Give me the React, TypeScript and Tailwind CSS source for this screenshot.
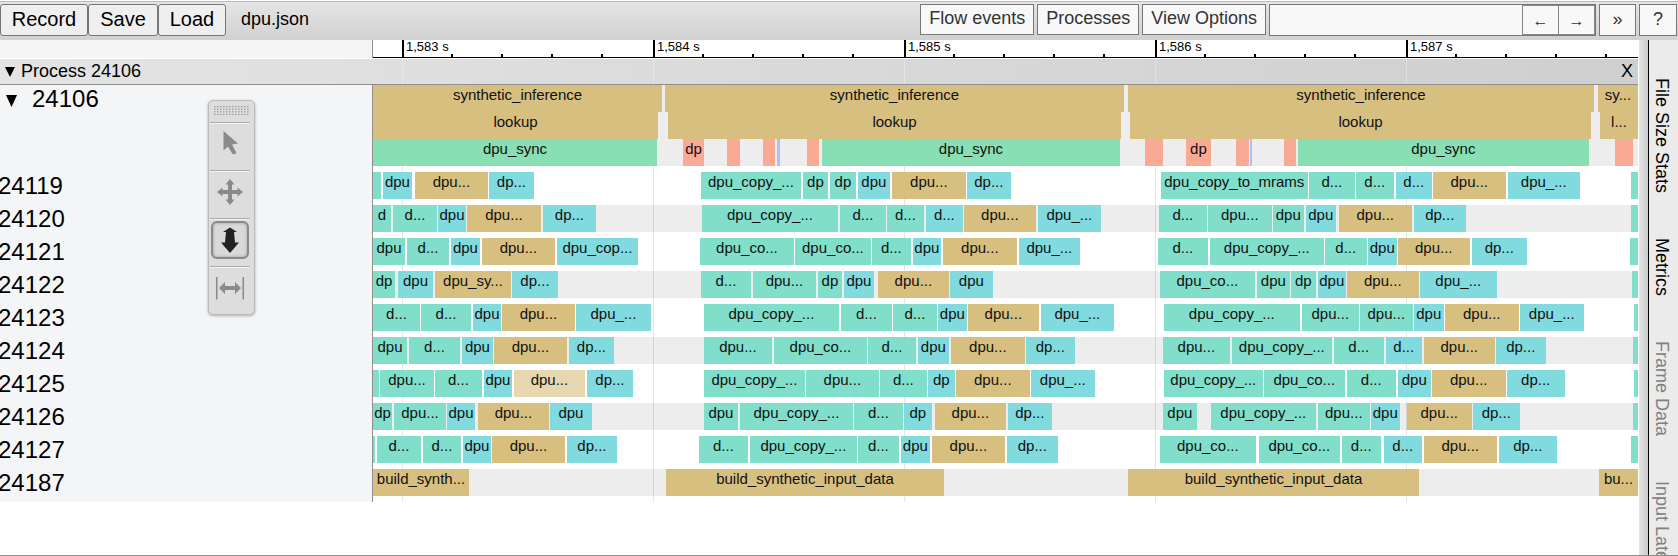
import React from "react";

type Tone = "teal" | "cyan" | "tan" | "sand" | "green" | "coral" | "blue";
type Slice = [start: number, end: number, tone: Tone, label?: string];

const TONES: Record<Tone, string> = {
  teal: "bg-[#80decb]",
  cyan: "bg-[#80dade]",
  tan: "bg-[#d7bf80]",
  sand: "bg-[#e6d7b0]",
  green: "bg-[#87dfb3]",
  coral: "bg-[#faaa94]",
  blue: "bg-[#a3c4fb]",
};

// Visible span of the timeline, in slice units.
const SPAN = 1265;
const pct = (v: number) => `${(v / SPAN) * 100}%`;

const MAIN_ROWS: Slice[][] = [
  [
    [0, 289, "tan", "synthetic_inference"],
    [292, 751, "tan", "synthetic_inference"],
    [755, 1221, "tan", "synthetic_inference"],
    [1225, 1265, "tan", "sy..."],
  ],
  [
    [0, 285, "tan", "lookup"],
    [295, 748, "tan", "lookup"],
    [757, 1218, "tan", "lookup"],
    [1227, 1265, "tan", "l..."],
  ],
  [
    [0, 284, "green", "dpu_sync"],
    [310, 331, "coral", "dp"],
    [354, 367, "coral"],
    [390, 402, "coral"],
    [404, 407, "blue"],
    [434, 446, "coral"],
    [449, 747, "green", "dpu_sync"],
    [772, 790, "coral"],
    [813, 838, "coral", "dp"],
    [863, 876, "coral"],
    [877, 879, "blue"],
    [911, 923, "coral"],
    [925, 1216, "green", "dpu_sync"],
    [1242, 1260, "coral"],
  ],
];

const THREADS: { id: string; slices: Slice[] }[] = [
  {
    id: "24119",
    slices: [
      [0, 8, "teal"], [10, 39, "cyan", "dpu"], [42, 115, "tan", "dpu..."], [116, 161, "cyan", "dp..."],
      [328, 428, "teal", "dpu_copy_..."], [430, 455, "teal", "dp"], [457, 483, "teal", "dp"], [485, 517, "cyan", "dpu"],
      [519, 593, "tan", "dpu..."], [594, 638, "cyan", "dp..."],
      [788, 935, "teal", "dpu_copy_to_mrams"], [936, 982, "teal", "d..."], [983, 1021, "teal", "d..."],
      [1023, 1059, "cyan", "d..."], [1060, 1133, "tan", "dpu..."], [1135, 1207, "cyan", "dpu_..."], [1258, 1265, "teal"],
    ],
  },
  {
    id: "24120",
    slices: [
      [0, 18, "teal", "d"], [20, 64, "teal", "d..."], [65, 93, "cyan", "dpu"], [94, 168, "tan", "dpu..."], [170, 223, "cyan", "dp..."],
      [329, 465, "teal", "dpu_copy_..."], [467, 513, "teal", "d..."], [514, 551, "teal", "d..."], [553, 590, "cyan", "d..."],
      [591, 663, "tan", "dpu..."], [665, 728, "cyan", "dpu_..."],
      [786, 834, "teal", "d..."], [835, 899, "teal", "dpu..."], [900, 931, "teal", "dpu"], [933, 963, "cyan", "dpu"],
      [966, 1039, "tan", "dpu..."], [1041, 1093, "cyan", "dp..."], [1258, 1265, "teal"],
    ],
  },
  {
    id: "24121",
    slices: [
      [0, 32, "teal", "dpu"], [34, 76, "teal", "d..."], [78, 107, "cyan", "dpu"], [109, 182, "tan", "dpu..."], [184, 265, "cyan", "dpu_cop..."],
      [327, 421, "teal", "dpu_co..."], [422, 498, "teal", "dpu_co..."], [499, 538, "teal", "d..."], [540, 568, "cyan", "dpu"],
      [570, 644, "tan", "dpu..."], [646, 707, "cyan", "dpu_..."],
      [785, 835, "teal", "d..."], [837, 951, "teal", "dpu_copy_..."], [952, 994, "teal", "d..."], [995, 1024, "cyan", "dpu"],
      [1025, 1097, "tan", "dpu..."], [1099, 1154, "cyan", "dp..."], [1257, 1265, "teal"],
    ],
  },
  {
    id: "24122",
    slices: [
      [0, 22, "teal", "dp"], [25, 60, "cyan", "dpu"], [62, 138, "tan", "dpu_sy..."], [139, 185, "cyan", "dp..."],
      [328, 378, "teal", "d..."], [380, 443, "teal", "dpu..."], [445, 469, "teal", "dp"], [471, 501, "cyan", "dpu"],
      [505, 576, "tan", "dpu..."], [577, 620, "cyan", "dpu"],
      [787, 882, "teal", "dpu_co..."], [884, 917, "teal", "dpu"], [918, 943, "teal", "dp"], [945, 973, "cyan", "dpu"],
      [974, 1046, "tan", "dpu..."], [1047, 1124, "cyan", "dpu_..."], [1259, 1265, "teal"],
    ],
  },
  {
    id: "24123",
    slices: [
      [0, 47, "teal", "d..."], [48, 98, "teal", "d..."], [100, 128, "cyan", "dpu"], [129, 202, "tan", "dpu..."], [203, 278, "cyan", "dpu_..."],
      [331, 466, "teal", "dpu_copy_..."], [468, 519, "teal", "d..."], [520, 564, "teal", "d..."], [565, 594, "cyan", "dpu"],
      [595, 666, "tan", "dpu..."], [668, 741, "cyan", "dpu_..."],
      [791, 927, "teal", "dpu_copy_..."], [929, 986, "teal", "dpu..."], [987, 1040, "teal", "dpu..."], [1041, 1071, "cyan", "dpu"],
      [1072, 1146, "tan", "dpu..."], [1147, 1211, "cyan", "dpu_..."], [1261, 1265, "teal"],
    ],
  },
  {
    id: "24124",
    slices: [
      [0, 34, "teal", "dpu"], [36, 87, "teal", "d..."], [89, 120, "cyan", "dpu"], [121, 194, "tan", "dpu..."], [196, 241, "cyan", "dp..."],
      [331, 399, "teal", "dpu..."], [401, 494, "teal", "dpu_co..."], [495, 543, "teal", "d..."], [545, 576, "cyan", "dpu"],
      [578, 652, "tan", "dpu..."], [653, 702, "cyan", "dp..."],
      [790, 857, "teal", "dpu..."], [859, 959, "teal", "dpu_copy_..."], [961, 1011, "teal", "d..."], [1013, 1049, "cyan", "d..."],
      [1051, 1122, "tan", "dpu..."], [1123, 1173, "cyan", "dp..."], [1260, 1265, "teal"],
    ],
  },
  {
    id: "24125",
    slices: [
      [0, 6, "teal"], [7, 61, "teal", "dpu..."], [62, 109, "teal", "d..."], [111, 139, "cyan", "dpu"], [141, 212, "sand", "dpu..."], [214, 260, "cyan", "dp..."],
      [331, 432, "teal", "dpu_copy_..."], [433, 506, "teal", "dpu..."], [507, 554, "teal", "d..."], [555, 582, "cyan", "dp"],
      [583, 657, "tan", "dpu..."], [658, 722, "cyan", "dpu_..."],
      [791, 890, "teal", "dpu_copy_..."], [891, 972, "teal", "dpu_co..."], [974, 1023, "teal", "d..."], [1025, 1058, "cyan", "dpu"],
      [1059, 1133, "tan", "dpu..."], [1134, 1192, "cyan", "dp..."], [1261, 1265, "teal"],
    ],
  },
  {
    id: "24126",
    slices: [
      [0, 19, "teal", "dp"], [21, 73, "teal", "dpu..."], [74, 102, "cyan", "dpu"], [105, 176, "tan", "dpu..."], [177, 219, "cyan", "dpu"],
      [331, 365, "teal", "dpu"], [367, 480, "teal", "dpu_copy_..."], [481, 530, "teal", "d..."], [531, 559, "cyan", "dp"],
      [562, 633, "tan", "dpu..."], [635, 679, "cyan", "dp..."],
      [790, 824, "teal", "dpu"], [838, 943, "teal", "dpu_copy_..."], [945, 997, "teal", "dpu..."], [998, 1027, "cyan", "dpu"],
      [1034, 1099, "tan", "dpu..."], [1100, 1147, "cyan", "dp..."], [1260, 1265, "teal"],
    ],
  },
  {
    id: "24127",
    slices: [
      [0, 2, "teal"], [4, 48, "teal", "d..."], [50, 88, "teal", "d..."], [90, 118, "cyan", "dpu"], [119, 192, "tan", "dpu..."], [194, 244, "cyan", "dp..."],
      [326, 375, "teal", "d..."], [377, 484, "teal", "dpu_copy_..."], [485, 526, "teal", "d..."], [528, 557, "cyan", "dpu"],
      [559, 632, "tan", "dpu..."], [634, 685, "cyan", "dp..."],
      [787, 883, "teal", "dpu_co..."], [886, 967, "teal", "dpu_co..."], [969, 1008, "teal", "d..."], [1011, 1049, "cyan", "d..."],
      [1051, 1124, "tan", "dpu..."], [1126, 1184, "cyan", "dp..."], [1258, 1265, "teal"],
    ],
  },
  {
    id: "24187",
    slices: [
      [0, 96, "tan", "build_synth..."],
      [293, 571, "tan", "build_synthetic_input_data"],
      [755, 1046, "tan", "build_synthetic_input_data"],
      [1226, 1265, "tan", "bu..."],
    ],
  },
];

const FIRST_MAJOR = 29;
const MAJOR_STEP = 251;
const MAJORS = ["1,583 s", "1,584 s", "1,585 s", "1,586 s", "1,587 s"].map((label, i) => ({
  label,
  at: FIRST_MAJOR + i * MAJOR_STEP,
}));
const MINORS = Array.from({ length: 25 }, (_, i) => i)
  .filter((i) => i % 5 !== 0)
  .map((i) => Math.floor(FIRST_MAJOR + (i * MAJOR_STEP) / 5) - 1);

function SliceRow({ slices }: { slices: Slice[] }) {
  return (
    <div className="relative flex h-[27px]">
      {slices.map(([start, end, tone, label], i) => (
        <div
          key={start}
          className={`flex shrink-0 justify-center text-[15px] leading-5 whitespace-nowrap text-[#111] ${TONES[tone]}`}
          style={{ marginLeft: pct(start - (i ? slices[i - 1][1] : 0)), width: pct(end - start) }}
        >
          {label}
        </div>
      ))}
    </div>
  );
}

function GridLines({ className }: { className: string }) {
  return (
    <>
      {MAJORS.map((m) => (
        <div key={m.at} className={`absolute inset-y-0 w-px ${className}`} style={{ left: pct(m.at) }} />
      ))}
    </>
  );
}

function Ruler() {
  return (
    <div className="relative h-[18px] flex-1 border-b border-black bg-white">
      {MINORS.map((at) => (
        <div key={at} className="absolute bottom-0 h-[3px] w-0.5 bg-black" style={{ left: pct(at) }} />
      ))}
      {MAJORS.map((m) => (
        <div
          key={m.at}
          className="absolute inset-y-0 border-l-2 border-black pl-0.5 text-[13px] leading-[13px] text-black"
          style={{ left: pct(m.at) }}
        >
          {m.label}
        </div>
      ))}
    </div>
  );
}

function Triangle({ className }: { className: string }) {
  return (
    <svg viewBox="0 0 10 10" preserveAspectRatio="none" className={className} aria-hidden="true">
      <path d="M0 0H10L5 10Z" fill="#000" />
    </svg>
  );
}

const TOOLS: { name: string; icon: React.ReactNode }[] = [
  { name: "Select", icon: <path d="M8.500 2V21.500L13 17.500L17.500 25Q19.500 25.500 21.500 24L17 15.500L23 14.500Z" /> },
  {
    name: "Pan",
    icon: <path d="M15 2L19.500 7.500H17V13H22.500V10.500L28 15L22.500 19.500V17H17V22.500H19.500L15 28L10.500 22.500H13V17H7.500V19.500L2 15L7.500 10.500V13H13V7.500H10.500Z" />,
  },
  { name: "Zoom", icon: <path d="M15 2.500L22 7H19L20 17.500H24L15 28L6 17.500H10L11 7H8Z" /> },
  {
    name: "Timing",
    icon: <path d="M1 4H2.500V26.500H1ZM27.500 4H29V26.500H27.500ZM4 15L10 9V13H20V9L26 15L20 21V17H10V21Z" />,
  },
];

function ToolPalette() {
  return (
    <div className="absolute top-[100px] left-[208px] z-20 w-[47px] rounded-[5px] border border-[#bbb] bg-[#ddd] px-px shadow-[0_1px_3px_rgba(0,0,0,0.3)]">
      <div className="flex h-[21px] justify-center pt-[5px]">
        <svg viewBox="0 0 35 9" className="h-[9px] w-[35px]" aria-hidden="true">
          {[0, 1, 2, 3].map((r) =>
            Array.from({ length: 12 }, (_, c) => (
              <rect key={`${r}-${c}`} x={c * 3} y={r * 2.6} width="1.500" height="1.200" fill="#9b9b9b" />
            )),
          )}
        </svg>
      </div>
      {TOOLS.map((tool) => {
        const on = tool.name === "Zoom";
        return (
          <div key={tool.name} className="mr-[3px] flex h-12 justify-center border-t border-[#aaa] pt-[2px] shadow-[inset_0_1px_0_#f4f4f4]">
            <button
              type="button"
              aria-label={tool.name}
              aria-pressed={on}
              className={
                on
                  ? "flex h-[38px] w-[38px] items-center justify-center rounded-md border-2 border-[#8a8a8a] bg-[#d9d9d9] shadow-[inset_0_0_3px_rgba(0,0,0,0.3)]"
                  : "flex h-[38px] w-[38px] items-center justify-center"
              }
            >
              <svg viewBox="0 0 30 30" className={on ? "h-[30px] w-[30px] fill-[#222]" : "h-[30px] w-[30px] fill-[#8a8a8a]"}>
                {tool.icon}
              </svg>
            </button>
          </div>
        );
      })}
    </div>
  );
}

const MENU = "h-[31px] border border-[#777] bg-[#f8f8f8] px-2 pb-1 text-[18px] leading-6 text-[#333]";
const FILE = "h-8 rounded-[3px] border border-[#767676] bg-[#efefef] pb-0.5 text-[20px] leading-7 text-black";
const LABEL = "w-[373px] shrink-0 border-r border-[#8e8e8e] bg-[#f4f5f7]";

export default function App() {
  return (
    <div className="relative flex h-screen flex-col overflow-hidden border-b border-[#8e8e8e] bg-white font-['Liberation_Sans',Arial,sans-serif] text-black">
      <header className="mt-px flex h-[39px] shrink-0 items-start border-t border-[#bbb] bg-linear-to-b from-[#e5e5e5] to-[#d1d1d1] pt-0.5">
        <button type="button" className={`${FILE} w-[88px]`}>Record</button>
        <button type="button" className={`${FILE} w-[70px]`}>Save</button>
        <button type="button" className={`${FILE} w-[68px]`}>Load</button>
        <span className="ml-[15px] text-[18px] leading-[30px]">dpu.json</span>
        <div className="ml-auto flex gap-[3px] pr-px">
          <button type="button" className={MENU}>Flow events</button>
          <button type="button" className={MENU}>Processes</button>
          <button type="button" className={MENU}>View Options</button>
          <div className="flex h-8 border border-[#777] bg-[#f8f8f8]">
            <input type="text" aria-label="Search" className="w-[252px] bg-transparent px-1 text-[16px] outline-none" />
            <button type="button" aria-label="Previous match" className="w-9 border border-r-0 border-[#888] pt-0.5 text-[16px] leading-5 text-[#333]">←</button>
            <button type="button" aria-label="Next match" className="w-[37px] border border-[#888] pt-0.5 text-[16px] leading-5 text-[#333]">→</button>
          </div>
          <button type="button" className="h-8 w-[37px] border border-[#777] bg-[#f8f8f8] pb-0.5 text-[18px] leading-6 text-[#333]">»</button>
          <button type="button" className="h-8 w-[38px] border border-[#777] bg-[#f8f8f8] pb-0.5 text-[18px] leading-6 text-[#333]">?</button>
        </div>
      </header>

      <div className="flex min-h-0 flex-1">
        <main className="min-w-0 flex-1">
          <div className="flex">
            <div className={LABEL} />
            <Ruler />
          </div>

          <div className="relative mt-px flex h-[26px] items-center border-b border-[#8e8e8e] bg-linear-to-r from-[#e4e4e4] to-[#cfcfcf] pr-[5px] pb-0.5 pl-[5px] text-[18px]">
            <Triangle className="mt-0.5 h-[10px] w-[10px]" />
            <span className="ml-1.5 leading-5">Process 24106</span>
            <button type="button" aria-label="Close process" className="ml-auto leading-5">X</button>
            <div className="pointer-events-none absolute inset-y-0 right-0 left-[373px]">
              <GridLines className="bg-white/30" />
            </div>
          </div>

          <div className="relative overflow-hidden">
            <div className="absolute inset-y-0 right-0 left-[373px]">
              <GridLines className="bg-black/10" />
            </div>
            <div className="flex">
              <div className={LABEL}>
                <div className="flex items-center pl-1.5 text-[24px] leading-[27px]">
                  <Triangle className="mt-2 mb-1 h-3 w-[11px]" />
                  <span className="ml-[15px]">24106</span>
                </div>
              </div>
              <div className="min-w-0 flex-1 pb-1.5">
                <div className="bg-[#ededed]">
                  {MAIN_ROWS.map((slices, i) => (
                    <SliceRow key={i} slices={slices} />
                  ))}
                </div>
              </div>
            </div>
            {THREADS.map((t, i) => (
              <div key={t.id} className="flex">
                <div className={LABEL}>
                  <div className="-ml-0.5 text-[24px] leading-[27px]">{t.id}</div>
                </div>
                <div className="min-w-0 flex-1 pb-1.5">
                  <div className={i % 2 ? "bg-[#ededed]" : ""}>
                    <SliceRow slices={t.slices} />
                  </div>
                </div>
              </div>
            ))}
          </div>
        </main>

        <div className="ml-px w-[10px] shrink-0 border-r border-black bg-linear-to-r from-[#e5e5e5] to-[#c9c9c9]" />
        <nav className="flex w-[29px] shrink-0 flex-col items-start gap-[45px] overflow-hidden bg-[#ebebeb] pt-[38px]">
          {["File Size Stats", "Metrics", "Frame Data", "Input Latency"].map((name, i) => (
            <button
              key={name}
              type="button"
              className={`shrink-0 text-[18px] leading-[26px] whitespace-nowrap [writing-mode:vertical-rl] ${i < 2 ? "text-black" : "text-[#808080]"}`}
            >
              {name}
            </button>
          ))}
        </nav>
      </div>

      <ToolPalette />
    </div>
  );
}
